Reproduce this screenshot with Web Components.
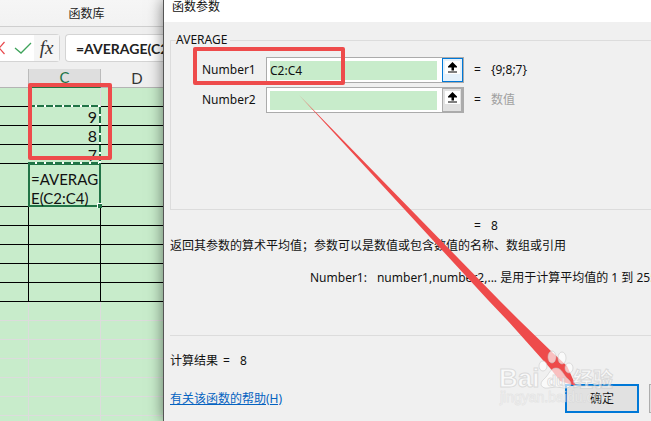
<!DOCTYPE html>
<html lang="zh-CN">
<head>
<meta charset="utf-8">
<title>函数参数</title>
<style>
html,body{margin:0;height:100%}
body{font:13px/20px "Noto Sans","Noto Sans CJK SC",sans-serif;color:#111;overflow:hidden}
</style>
</head>
<body>
<excel-screen></excel-screen>
<script>
const define=(name,html,setup)=>customElements.define(name,class extends HTMLElement{
  constructor(){super();const r=this.attachShadow({mode:'open'});r.innerHTML=html;this.r=r}
  connectedCallback(){if(setup)setup.call(this,this.r)}
});

define('ribbon-bar',`<style>
:host{display:block;height:27px;box-sizing:border-box;border-bottom:1px solid #cfcfcf;background:linear-gradient(#f6f6f6,#f2f2f2);text-align:center;line-height:28px;padding-left:10px;font-size:12px;color:#222}
</style><slot></slot>`);

define('formula-bar',`<style>
:host{display:flex;gap:5px;height:42px;box-sizing:border-box;padding-top:7px;background:#efefef;overflow:hidden}
.box{height:28px;box-sizing:border-box;border:1px solid #d4d4d4;background:#fff;border-radius:0 4px 4px 0;display:flex}
.tools{width:60px;flex:none;border-left:0}
button{border:0;padding:0;background:none;display:block}
.fx{background:#f5f5f5;width:25px;font:italic 19px/24px "Liberation Serif",serif;color:#333;margin-left:auto}
input{flex:1;min-width:0;box-sizing:border-box;border:1px solid #d4d4d4;border-right:0;height:28px;border-radius:4px 0 0 4px;padding:0 0 0 10px;font:bold 14px Lato,"Open Sans",sans-serif;color:#222;background:#fff}
svg{display:block}
</style>
<div class="box tools">
<button aria-label="取消"><svg width="8" height="26"><path d="M-6 7 4.500 19M4.500 7-6 19" fill="none" stroke="#e8484c" stroke-width="1.200"/></svg></button>
<button aria-label="输入"><svg width="26" height="26"><path d="m7 13 6 5L23 8" fill="none" stroke="#3fa35b" stroke-width="1.300"/></svg></button>
<button class="fx" aria-label="插入函数">fx</button></div>
<input aria-label="编辑栏" value="=AVERAGE(C2:C4)">`);

define('sheet-grid',`<style>
:host{display:block;flex:1;overflow:hidden;background:#c8eccb}
table{border-spacing:0;table-layout:fixed;width:calc(100% + 10px)}
td,th{box-sizing:border-box;padding:0;height:19px;font:300 15px/17px Lato,"Noto Sans",sans-serif;border:0 solid #000;border-bottom-width:1px}
th{background:#efefef;color:#333;font-weight:400;border-color:#b4b4b4}
th.on{background:#dedede;color:#217346;border-bottom:2px solid #217346;border-left:1px solid #bbb;border-right:1px solid #bbb}
.a{width:28px}.c{width:73px;border-left-width:1px;border-right-width:1px}
.top .c{border-left:0;border-right-color:#dcdcdc;border-bottom:0;background:repeating-linear-gradient(90deg,#217346 0 7px,#fff 7px 9px) left bottom/100% 2px no-repeat}
.c.v{text-align:right;padding-right:4px;border-left:0;border-right:0;font-size:16px;font-weight:400;background:repeating-linear-gradient(#217346 0 7px,#fff 7px 9px) right top/2px 100% no-repeat}
.r4 .c.v{border-bottom:0;background:repeating-linear-gradient(#217346 0 7px,#fff 7px 9px) right top/2px 100% no-repeat,repeating-linear-gradient(90deg,#217346 0 7px,#fff 7px 9px) left bottom/100% 2px no-repeat}
.tall td{height:43px}
.tall .c{border:2px solid #217346;border-top-width:1px;position:relative;padding:5px 0 0 1px;font-size:15px;font-weight:400;line-height:19px;white-space:nowrap;vertical-align:top}
.tall .c div{height:35px}
.tall .c::after{content:"";position:absolute;right:-3px;bottom:-3px;width:4px;height:4px;background:#217346;border:solid #fff;border-width:1px 0 0 1px}
.g td{border-color:#dcdcdc}
</style><table><thead><tr><th class="a"></th><th class="c on">C</th><th>D</th></tr></thead><tbody></tbody></table>`,
function(r){
  const rows=[['top',''],['num','9'],['num','8'],['num r4','7'],['tall','<div>=AVERAG<br>E(C2:C4)</div>'],...Array(5).fill(['','']),...Array(7).fill(['g',''])];
  r.querySelector('tbody').innerHTML=rows.map(([k,t])=>`<tr class="${k}"><td></td><td class="c ${k.includes('num')?'v':''}">${t}</td><td></td></tr>`).join('');
});

define('range-field',`<style>
:host{display:grid;grid-template-columns:90px 198px 1fr;align-items:center;height:26px;margin-bottom:4px}
label{padding-left:26px}
.w{display:flex;height:26px;box-sizing:border-box;border:1px solid #ababab;background:#fff}
input{flex:1;min-width:0;border:0;background:#c8eccb;margin:3px 5px 2px 3px;padding:0;font:inherit;line-height:20px;color:#111}
button{width:21px;box-sizing:border-box;border:1px solid #ababab;border-right-width:2px;background:#e1e1e1;padding:0;margin:0;display:flex;justify-content:center;align-items:flex-start}
:host([active]) button{border:1px solid #0078d7;background:#e5f1fb}
svg{background:#fff;margin-top:2px;display:block}
.res{padding-left:10px;display:flex;gap:10px}
:host([empty]) .val{color:#a0a0a0}
</style><label for="i"></label><div class="w"><input id="i"><button aria-label="折叠"><svg width="15" height="13"><path d="M7.500 1 12 5.500v1H9V9.500H6.500V6.500H3v-1zM3 10.500h9v1H3z"/></svg></button></div><div class="res"><span>=</span><span class="val"><slot></slot></span></div>`,
function(r){r.querySelector('label').textContent=this.getAttribute('label');r.querySelector('input').value=this.getAttribute('value')||''});

define('param-group',`<style>
:host{display:block}
fieldset{margin:0;min-width:0;border:1px solid #dcdcdc;border-right:0;padding:7px 0 0 5px;height:180px;box-sizing:border-box}
legend{padding:0 3px 0 0;margin-left:0;line-height:20px}
</style><fieldset><legend>AVERAGE</legend><slot></slot></fieldset>`);

define('args-dialog',`<style>
:host{display:block;height:100%;box-sizing:border-box;background:#f0f0f0;border-left:1px solid #555;overflow:hidden;white-space:nowrap;box-shadow:0 0 14px rgba(0,0,0,.5)}
header{background:#fff;height:22px;padding-left:8px;line-height:14px;font-size:12px}
main{padding:8px 0 0 6px;font-size:12px}
p{margin:0}
.eq{padding:6px 0 0 304px;display:flex;gap:10px}
.arg{padding:12px 0 0 140px;display:flex;gap:10px}
hr{border:0;border-top:1px solid #dcdcdc;margin:47px 0 15px}
.sum{display:flex;gap:5px}.sum b{font-weight:400;margin-left:5px}
footer{display:flex;align-items:center;padding-top:13px}
.help{width:395px;flex:none}
a{color:#0563c1}
button{font:inherit;color:#111;background:#e1e1e1;width:74px;height:29px;border:2px solid #0078d7;padding:0;flex:none}
button+button{border:1px solid #adadad;margin-left:10px}
</style><header>函数参数</header><main>
<param-group><range-field label="Number1" value="C2:C4" active>{9;8;7}</range-field><range-field label="Number2" empty>数值</range-field></param-group>
<p class="eq"><span>=</span><span>8</span></p>
<p>返回其参数的算术平均值；参数可以是数值或包含数值的名称、数组或引用</p>
<p class="arg"><span>Number1:</span><span>number1,number2,... 是用于计算平均值的 1 到 255</span></p>
<hr><p class="sum"><span>计算结果</span><span>=</span><b>8</b></p>
<footer><div class="help"><a href="#help">有关该函数的帮助(H)</a></div><button>确定</button><button aria-label="取消"></button></footer></main>`);

define('mark-up',`<style>
:host{position:absolute;inset:0;pointer-events:none}svg{display:block;overflow:visible}
text{font-family:"Liberation Sans","Noto Sans CJK SC",sans-serif}
</style><svg width="100%" height="421" aria-hidden="true">
<g fill="none" stroke="#ee4b4b" stroke-width="4" stroke-linejoin="round"><rect x="30" y="85" width="80" height="73"/><rect x="195" y="49" width="148" height="34"/></g>
<path fill="#ee4b4b" d="M299 95 499 300 519 320 553 353 567 366 576 386 560 381 550 368 507 320 488 300Z"/>
<g fill="#fff" fill-opacity=".65" stroke="#c4c4c4" stroke-opacity=".55"><ellipse cx="552" cy="357" rx="4" ry="6"/><ellipse cx="562" cy="358" rx="4" ry="6"/><ellipse cx="543" cy="366" rx="4" ry="5"/><ellipse cx="569" cy="368" rx="4" ry="5"/><path d="M556 368c6 0 7 7 12 11 6 5 2 10-4 9q-8-2-16 0c-6 1-10-4-4-9 5-4 6-11 12-11"/>
<text x="499" y="387" font-size="26" font-weight="700">Bai</text><text x="547" y="386" font-size="15" font-weight="700">du</text><text x="573" y="387" font-size="20" font-weight="700">经验</text></g>
<text x="500" y="402" font-size="14" fill="#fff" fill-opacity=".6" stroke="#bbb" stroke-opacity=".25">jingyan.baidu.com</text></svg>`);

define('excel-screen',`<style>
:host{display:grid;grid-template-columns:163px minmax(0,1fr);height:100vh;position:relative;overflow:hidden}
.book{display:flex;flex-direction:column;min-width:0;overflow:hidden}args-dialog{position:relative}
</style><div class="book"><ribbon-bar>函数库</ribbon-bar><formula-bar></formula-bar><sheet-grid></sheet-grid></div><args-dialog></args-dialog><mark-up></mark-up>`);
</script>
</body>
</html>
